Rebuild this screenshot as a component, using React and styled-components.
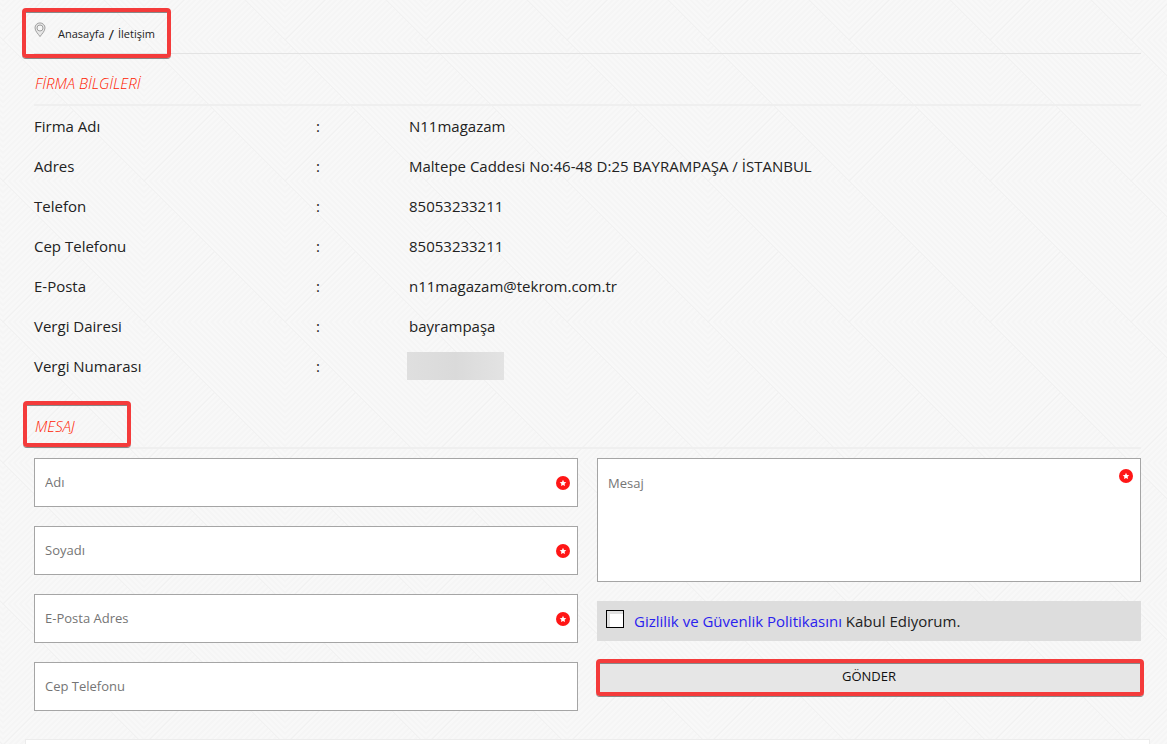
import React from "react";
import styled, { createGlobalStyle } from "styled-components";

// 141px tile: falling stripes on top of the diagonal, rising ones below it
const steps = Array.from({ length: 50 }, (_, i) => i * 5.64);
const tile = encodeURIComponent(
  `<svg xmlns="http://www.w3.org/2000/svg" width="141" height="141">
    <clipPath id="t"><path d="M0 0h141v141z"/></clipPath>
    <clipPath id="b"><path d="M0 0v141h141z"/></clipPath>
    <g stroke="#f5f5f5" stroke-width="2">
      <g clip-path="url(#t)">${steps
        .map((s) => `<path d="M${s - 141} -141l423 423"/>`)
        .join("")}</g>
      <g clip-path="url(#b)">${steps
        .map((s) => `<path d="M-10 ${s + 10}l300 -300"/>`)
        .join("")}</g>
    </g>
    <path d="M0 0l141 141M0 141l70 -70" stroke="#f1f1f1" fill="none"/>
  </svg>`
);

const GlobalStyle = createGlobalStyle`
  * {
    box-sizing: border-box;
  }

  body {
    margin: 0;
    background: #f8f8f8 url("data:image/svg+xml,${tile}") 3px 40px;
    color: #222;
    font-family: "Open Sans", sans-serif;
    font-size: 15px;
  }
`;

const Page = styled.main`
  padding: 8px 26px 0 34px;
`;

const Frame = styled.span`
  position: absolute;
  inset: ${({ $inset }) => $inset};
  border: 4px solid #f43b3b;
  border-radius: 4px;
  box-shadow: 0 1px 0 #888, inset 0 1px 0 #888;
  pointer-events: none;
`;

const Breadcrumb = styled.nav`
  display: flex;
  height: 46px;
  border-bottom: 1px solid #e3e3e3;
`;

const Trail = styled.div`
  position: relative;
  display: flex;
  align-items: center;
  gap: 4px;
  padding: 6px 16px 0 0;

  svg {
    align-self: flex-start;
    margin: 8px 8px 0 0;
  }

  a {
    color: #222;
    font-size: 11px;
    text-decoration: none;
  }
`;

const Heading = styled.h2`
  position: relative;
  display: flex;
  align-items: center;
  width: 107px;
  height: 50px;
  margin: 0;
  padding: 7px 0 0 1px;
  color: #ff1a00;
  font-size: 15px;
  font-style: italic;
  font-weight: 300;
  white-space: nowrap;
`;

const Section = styled.section`
  margin-bottom: ${({ $gap }) => $gap}px;
`;

const Divider = styled.div`
  height: 2px;
  background: #efefef;
`;

const Info = styled.table`
  width: 100%;
  border-collapse: collapse;
  table-layout: fixed;

  th,
  td {
    height: 40px;
    padding: 0;
    font-weight: 400;
    text-align: left;
  }

  th {
    width: 282px;
  }

  td:nth-child(2) {
    width: 93px;
  }
`;

const Redacted = styled.span`
  display: block;
  width: 97px;
  height: 28px;
  margin-left: -2px;
  background: linear-gradient(90deg, #dfdfdf, #dadada 50%, #e3e3e3);
`;

const Form = styled.form`
  display: grid;
  grid-template-columns: 1fr 1fr;
  gap: 19px;
  align-items: start;
  margin-top: 9px;
`;

const Column = styled.div`
  display: flex;
  flex-direction: column;
  gap: 19px;
`;

const Field = styled.label`
  position: relative;
  display: block;

  input,
  textarea {
    display: block;
    width: 100%;
    height: 49px;
    padding: 0 32px 1px 10px;
    border: 1px solid #a5a5a5;
    border-radius: 0;
    background: #fff;
    font-family: inherit;
    font-size: 13px;
    resize: none;
  }

  textarea {
    height: 124px;
    padding-top: 15px;
  }

  ::placeholder {
    color: #757575;
  }
`;

const Star = styled.svg`
  position: absolute;
  top: ${({ $top }) => $top}px;
  right: 8px;
`;

const Consent = styled.label`
  display: flex;
  align-items: center;
  height: 40px;
  padding: 0 9px 1px;
  background: #ddd;

  a {
    color: #2a22ee;
    text-decoration: none;
  }
`;

const Checkbox = styled.input`
  appearance: none;
  width: 18px;
  height: 18px;
  margin: 0 10px 3px 0;
  border: 1px solid #000;
  background: #fff;
  box-shadow: inset 2px 2px 0 1px #e0e0e0;

  &:checked {
    background: #2a22ee;
  }
`;

const SubmitRow = styled.div`
  position: relative;
`;

const Submit = styled.button`
  display: block;
  width: 100%;
  height: 32px;
  padding: 0;
  border: none;
  background: #e6e6e6;
  color: #111;
  font-family: inherit;
  font-size: 13px;
`;

const Footer = styled.footer`
  height: 5px;
  margin: 28px -9px 0;
  border: 1px solid #ececec;
  border-bottom: none;
  background: #fff;
`;

const PinIcon = () => (
  <svg width="12" height="16" viewBox="0 0 12 16" fill="none" stroke="#a0a0a0">
    <path
      d="M6 14.600C4.500 12.200 1 9.300 1 5.900a5 5 0 0 1 10 0c0 3.400-3.500 6.300-5 8.700z"
      fill="#e6e6e6"
    />
    <circle cx="6" cy="6" r="3" fill="#f6f6f6" />
  </svg>
);

const Required = ({ top = 18 }) => (
  <Star $top={top} width="14" height="14" viewBox="0 0 14 14">
    <circle cx="7" cy="7" r="7" fill="#ff1616" />
    <path
      d="M7 3.800l1 2.100 2.300.3-1.700 1.600.4 2.300-2-1.100-2 1.100.4-2.300-1.700-1.600 2.300-.3z"
      fill="#fff"
    />
  </Star>
);

const company = [
  ["Firma Adı", "N11magazam"],
  ["Adres", "Maltepe Caddesi No:46-48 D:25 BAYRAMPAŞA / İSTANBUL"],
  ["Telefon", "85053233211"],
  ["Cep Telefonu", "85053233211"],
  ["E-Posta", "n11magazam@tekrom.com.tr"],
  ["Vergi Dairesi", "bayrampaşa"],
  ["Vergi Numarası", <Redacted key="tax" />],
];

const fields = [
  { label: "Adı", type: "text", required: true },
  { label: "Soyadı", type: "text", required: true },
  { label: "E-Posta Adres", type: "email", required: true },
  { label: "Cep Telefonu", type: "tel", required: false },
];

export default function App() {
  return (
    <>
      <GlobalStyle />
      <Page>
        <Breadcrumb>
          <Trail>
            <PinIcon />
            <a href="#home">Anasayfa</a>
            <span>/</span>
            <a href="#contact">İletişim</a>
            <Frame $inset="0 0 -5px -12px" />
          </Trail>
        </Breadcrumb>

        <Section $gap={11}>
          <Heading>FİRMA BİLGİLERİ</Heading>
          <Divider />
          <Info>
            <tbody>
              {company.map(([label, value]) => (
                <tr key={label}>
                  <th scope="row">{label}</th>
                  <td>:</td>
                  <td>{value}</td>
                </tr>
              ))}
            </tbody>
          </Info>
        </Section>

        <Section $gap={0}>
          <Heading>
            MESAJ
            <Frame $inset="4px 10px 0 -11px" />
          </Heading>
          <Divider />
          <Form onSubmit={(e) => e.preventDefault()}>
            <Column>
              {fields.map(({ label, type, required }) => (
                <Field key={label}>
                  <input
                    type={type}
                    placeholder={label}
                    aria-label={label}
                    required={required}
                  />
                  {required && <Required />}
                </Field>
              ))}
            </Column>
            <Column>
              <Field>
                <textarea placeholder="Mesaj" aria-label="Mesaj" required />
                <Required top={11} />
              </Field>
              <Consent>
                <Checkbox type="checkbox" />
                <span>
                  <a href="#privacy">Gizlilik ve Güvenlik Politikasını</a> Kabul
                  Ediyorum.
                </span>
              </Consent>
              <SubmitRow>
                <Submit type="submit">GÖNDER</Submit>
                <Frame $inset="-1px -3px -4px -1px" />
              </SubmitRow>
            </Column>
          </Form>
        </Section>

        <Footer />
      </Page>
    </>
  );
}
